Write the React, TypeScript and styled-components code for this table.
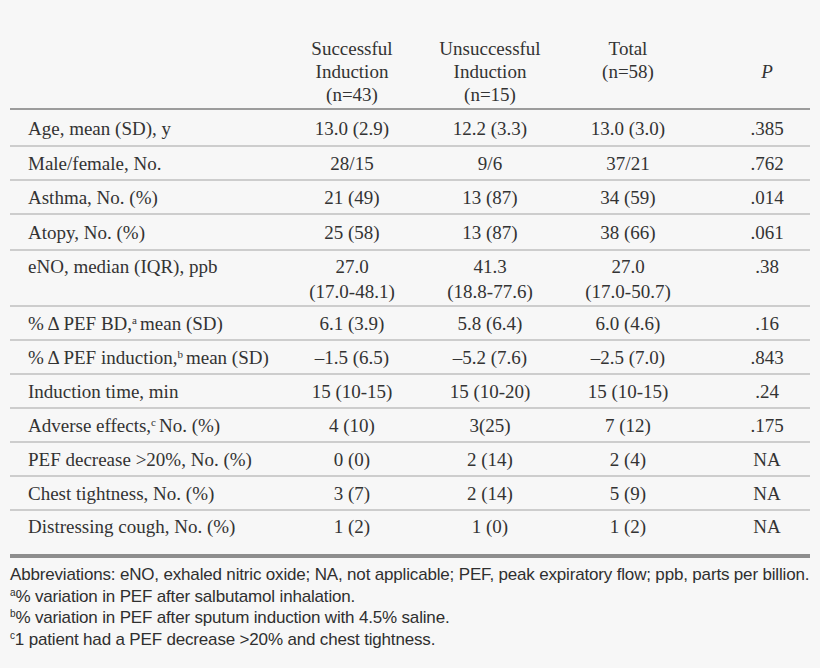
import React from "react";
import styled, { createGlobalStyle } from "styled-components";

const GlobalStyle = createGlobalStyle`
  html, body {
    margin: 0;
    padding: 0;
    background: #f7f7f7;
  }
`;

const Page = styled.div`
  width: 820px;
  height: 668px;
  padding: 0 10px;
  box-sizing: border-box;
  background: #f7f7f7;
  color: #333333;
  overflow: hidden;
`;

const cols = "274px 136px 140px 136px 1fr";

const HeaderRow = styled.div`
  display: grid;
  grid-template-columns: ${cols};
  align-items: start;
  padding-top: 37px;
  padding-bottom: 2px;
  border-bottom: 2px solid #9c9c9c;
  font-family: "Liberation Serif", "Times New Roman", serif;
  font-size: 19px;
  line-height: 23px;
`;

const HeadCell = styled.div<{ $italic?: boolean; $center?: boolean; $pad?: number }>`
  text-align: center;
  font-style: ${({ $italic }) => ($italic ? "italic" : "normal")};
  align-self: ${({ $center }) => ($center ? "center" : "start")};
  padding-left: ${({ $pad }) => $pad ?? 0}px;
`;

const Row = styled.div<{ $height: number; $top?: boolean; $padTop?: number }>`
  display: grid;
  grid-template-columns: ${cols};
  height: ${({ $height }) => $height}px;
  box-sizing: border-box;
  align-items: ${({ $top }) => ($top ? "start" : "center")};
  padding-top: ${({ $padTop }) => $padTop ?? 0}px;
  border-bottom: 2px solid #cdcdcd;
  font-family: "Liberation Serif", "Times New Roman", serif;
  font-size: 19px;
  line-height: 25px;

  &:last-child {
    border-bottom: 4px solid #8e8e8e;
  }
`;

const Label = styled.div`
  padding-left: 18px;
  white-space: nowrap;
`;

const Value = styled.div<{ $pad?: number }>`
  text-align: center;
  white-space: nowrap;
  padding-left: ${({ $pad }) => $pad ?? 0}px;
`;

const Sup = styled.sup`
  font-size: 11px;
  line-height: 0;
  vertical-align: 6px;
  margin-right: 3px;
`;

const Notes = styled.div`
  padding-top: 6px;
  font-family: "Liberation Sans", Arial, sans-serif;
  font-size: 17px;
  line-height: 21.7px;
  letter-spacing: -0.17px;
  color: #2f2f2f;
  white-space: nowrap;
`;

const NoteSup = styled.sup`
  font-size: 10px;
  line-height: 0;
  vertical-align: 6px;
`;

type RowData = {
  label: React.ReactNode;
  values: React.ReactNode[];
  height?: number;
  top?: boolean;
  padTop?: number;
};

const rows: RowData[] = [
  { label: "Age, mean (SD), y", values: ["13.0 (2.9)", "12.2 (3.3)", "13.0 (3.0)", ".385"], height: 37, padTop: 2 },
  { label: "Male/female, No.", values: ["28/15", "9/6", "37/21", ".762"] },
  { label: "Asthma, No. (%)", values: ["21 (49)", "13 (87)", "34 (59)", ".014"] },
  { label: "Atopy, No. (%)", values: ["25 (58)", "13 (87)", "38 (66)", ".061"], height: 36 },
  {
    label: "eNO, median (IQR), ppb",
    values: [
      <>27.0<br />(17.0-48.1)</>,
      <>41.3<br />(18.8-77.6)</>,
      <>27.0<br />(17.0-50.7)</>,
      ".38",
    ],
    height: 56,
    top: true,
    padTop: 3,
  },
  {
    label: <>% Δ PEF BD,<Sup>a</Sup>mean (SD)</>,
    values: ["6.1 (3.9)", "5.8 (6.4)", "6.0 (4.6)", ".16"],
  },
  {
    label: <>% Δ PEF induction,<Sup>b</Sup>mean (SD)</>,
    values: ["–1.5 (6.5)", "–5.2 (7.6)", "–2.5 (7.0)", ".843"],
  },
  { label: "Induction time, min", values: ["15 (10-15)", "15 (10-20)", "15 (10-15)", ".24"] },
  {
    label: <>Adverse effects,<Sup>c</Sup>No. (%)</>,
    values: ["4 (10)", "3(25)", "7 (12)", ".175"],
  },
  { label: "PEF decrease >20%, No. (%)", values: ["0 (0)", "2 (14)", "2 (4)", "NA"] },
  { label: "Chest tightness, No. (%)", values: ["3 (7)", "2 (14)", "5 (9)", "NA"] },
  {
    label: "Distressing cough, No. (%)",
    values: ["1 (2)", "1 (0)", "1 (2)", "NA"],
    height: 47,
    top: true,
    padTop: 3,
  },
];

export default function App() {
  return (
    <Page>
      <GlobalStyle />
      <HeaderRow>
        <HeadCell />
        <HeadCell>Successful<br />Induction<br />(n=43)</HeadCell>
        <HeadCell>Unsuccessful<br />Induction<br />(n=15)</HeadCell>
        <HeadCell>Total<br />(n=58)</HeadCell>
        <HeadCell $italic $center $pad={28}>P</HeadCell>
      </HeaderRow>
      <div>
        {rows.map((r, i) => (
          <Row key={i} $height={r.height ?? 34} $top={r.top} $padTop={r.padTop}>
            <Label>{r.label}</Label>
            {r.values.map((v, j) => (
              <Value key={j} $pad={j === 3 ? 28 : 0}>
                {v}
              </Value>
            ))}
          </Row>
        ))}
      </div>
      <Notes>
        Abbreviations: eNO, exhaled nitric oxide; NA, not applicable; PEF, peak expiratory flow; ppb, parts per billion.
        <br />
        <NoteSup>a</NoteSup>% variation in PEF after salbutamol inhalation.
        <br />
        <NoteSup>b</NoteSup>% variation in PEF after sputum induction with 4.5% saline.
        <br />
        <NoteSup>c</NoteSup>1 patient had a PEF decrease &gt;20% and chest tightness.
      </Notes>
    </Page>
  );
}
